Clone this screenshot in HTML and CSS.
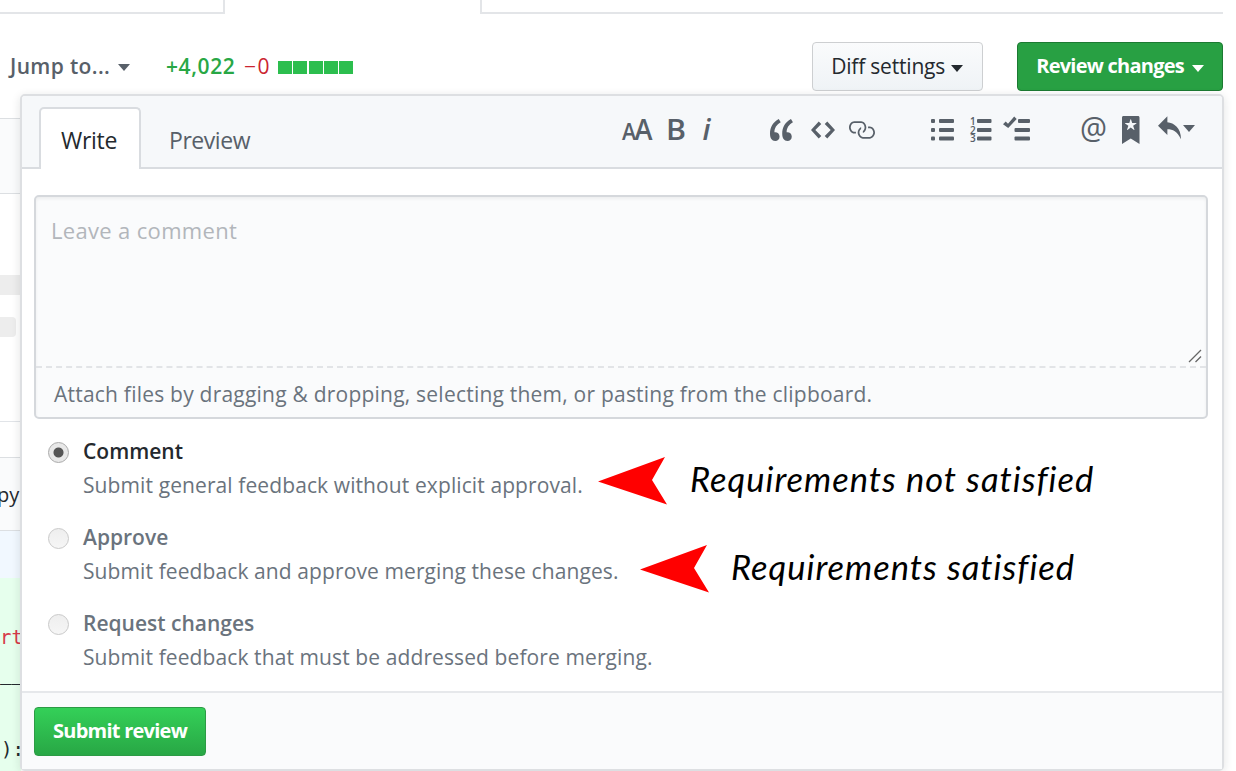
FILE: index.html
```
<!DOCTYPE html>
<html lang="en">
<head>
<meta charset="utf-8">
<title>Review changes</title>
<link rel="stylesheet" href="styles.css">
</head>
<body>
<div class="page">
  <nav class="tabs"><div class="tab-left"></div><div class="tab-right"></div></nav>
  <header class="bar">
    <span class="jump">Jump to...</span><i class="caret caret-jump"></i>
    <span class="plus">+4,022</span><span class="minus">−0</span>
    <span class="blocks"><i></i><i></i><i></i><i></i><i></i></span>
    <button class="btn btn-diff"><span class="diff-label">Diff settings</span><i class="caret"></i></button>
    <button class="btn btn-review"><span class="review-label">Review changes</span><i class="caret"></i></button>
  </header>
  <main class="behind">
    <div class="strip"></div>
    <div class="blank"><i class="chip-a"></i><i class="chip-b"></i></div>
    <div class="gap-row"></div>
    <div class="file-head"><span>py</span></div>
    <div class="hunk"></div>
    <div class="diff"><span class="kw">rt</span><span class="under">__</span><span class="code">):</span></div>
  </main>

  <section class="popover">
    <div class="head">
      <div class="tab active"><span class="write">Write</span></div>
      <div class="tab"><span class="preview">Preview</span></div>
      <div class="tools">
        <svg class="ic-size" viewBox="0 0 31 28"><text x="0" y="24" font-size="24" textLength="14" lengthAdjust="spacingAndGlyphs">A</text><text x="12.500" y="24" font-size="29" textLength="18" lengthAdjust="spacingAndGlyphs">A</text></svg>
        <svg class="ic-bold" viewBox="0 0 18 28"><text x="-2" y="24" font-size="29" textLength="20" lengthAdjust="spacingAndGlyphs">B</text></svg>
        <svg class="ic-italic" viewBox="0 0 10 28"><text x="0.500" y="24" font-size="29" font-style="italic">i</text></svg>
        <svg class="ic-quote" viewBox="0 0 13.2 16"><path d="M6.16 3.5C3.73 5.06 2.55 6.67 2.55 9.36c.16-.05.3-.05.44-.05 1.27 0 2.5.86 2.5 2.41 0 1.61-1.03 2.61-2.5 2.61-1.9 0-2.99-1.52-2.99-4.25 0-3.8 1.75-6.53 5.02-8.42L6.16 3.5zm7 0c-2.43 1.56-3.61 3.17-3.61 5.86.16-.05.3-.05.44-.05 1.27 0 2.5.86 2.5 2.41 0 1.61-1.03 2.61-2.5 2.61-1.89 0-2.98-1.52-2.98-4.25 0-3.8 1.75-6.53 5.02-8.42l1.14 1.84z"/></svg>
        <svg class="ic-code" viewBox="0 0 14 16"><path d="M9.5 3L8 4.5 11.5 8 8 11.5 9.5 13 14 8 9.5 3zm-5 0L0 8l4.5 5L6 11.5 2.5 8 6 4.5 4.5 3z"/></svg>
        <svg class="ic-link" viewBox="1 0 15 16"><path d="M4 9h1v1H4c-1.5 0-3-1.69-3-3.5S2.55 3 4 3h4c1.45 0 3 1.69 3 3.5 0 1.41-.91 2.72-2 3.25V8.59c.58-.45 1-1.27 1-2.09C10 5.22 8.98 4 8 4H4c-.98 0-2 1.22-2 2.5S3 9 4 9zm9-3h-1v1h1c1 0 2 1.22 2 2.5S13.98 12 13 12H9c-.98 0-2-1.22-2-2.5 0-.83.42-1.64 1-2.09V6.25c-1.09.53-2 1.84-2 3.25C6 11.31 7.55 13 9 13h4c1.45 0 3-1.69 3-3.5S14.5 6 13 6z"/></svg>
        <svg class="ic-ul" viewBox="0 0 23 28"><rect x="0" y="3" width="4" height="4" rx="1"/><rect x="0" y="12" width="4" height="4" rx="1"/><rect x="0" y="20.500" width="4" height="4" rx="1"/><rect x="8" y="3" width="15" height="4" rx="1"/><rect x="8" y="12" width="15" height="4" rx="1"/><rect x="8" y="20.500" width="15" height="4" rx="1"/></svg>
        <svg class="ic-ol" viewBox="0 0 22 28"><g class="digits"><text x="0" y="9">1</text><text x="0" y="17.500">2</text><text x="0" y="26">3</text></g><rect x="7" y="3" width="14.500" height="4" rx="1"/><rect x="7" y="12" width="14.500" height="4" rx="1"/><rect x="7" y="20.500" width="14.500" height="4" rx="1"/></svg>
        <svg class="ic-task" viewBox="0 0 27 28"><path d="M0 8.200L2.700 5.500 5 7.800 11.200.5 13.700 3 5.200 12z"/><rect x="15" y="3" width="12" height="4" rx="1"/><rect x="11.500" y="12" width="15.500" height="4" rx="1"/><rect x="11.500" y="20.500" width="15.500" height="4" rx="1"/></svg>
        <svg class="ic-at" viewBox="0 0 25 28"><text x="-1" y="23" font-size="31" textLength="27" lengthAdjust="spacingAndGlyphs">@</text></svg>
        <svg class="ic-mark" viewBox="0 0 10 16"><path d="M9 0H1C.27 0 0 .27 0 1v15l5-3.090L10 16V1c0-.73-.27-1-1-1zm-.78 4.250L6.360 5.610l.72 2.160c.06.22-.02.28-.2.17L5 6.600 3.120 7.940c-.19.11-.25.05-.2-.17l.72-2.160-1.860-1.360c-.17-.16-.14-.23.09-.23l2.300-.03.7-2.160h.25l.7 2.160 2.300.03c.23 0 .27.08.09.23z"/></svg>
        <svg class="ic-reply" viewBox=".5 0 13.500 16"><path d="M6 3.500c3.920.44 8 3.125 8 10-2.312-5.062-4.750-6-8-6V11L.5 5.500 6 0v3.500z"/></svg>
        <i class="caret caret-tool"></i>
      </div>
    </div>
    <div class="body">
      <div class="editor">
        <div class="area"><span class="leave">Leave a comment</span>
          <svg class="grip" viewBox="0 0 14 14"><path d="M1 13L13 1M7.500 13L13 7.500"/></svg>
        </div>
        <div class="attach"><span class="attach-label">Attach files by dragging &amp; dropping, selecting them, or pasting from the clipboard.</span></div>
      </div>
      <div class="option on"><i class="radio"></i><div class="copy"><b>Comment</b><span>Submit general feedback without explicit approval.</span></div></div>
      <div class="option"><i class="radio"></i><div class="copy"><b>Approve</b><span>Submit feedback and approve merging these changes.</span></div></div>
      <div class="option"><i class="radio"></i><div class="copy"><b>Request changes</b><span>Submit feedback that must be addressed before merging.</span></div></div>
    </div>
    <footer class="foot"><button class="btn btn-submit"><span class="submit-label">Submit review</span></button></footer>
  </section>

  <div class="note note-a"><svg class="arrow" viewBox="0 0 69 48"><path d="M0 24.500L67 0 54 23 69 47.500z"/></svg><span>Requirements not satisfied</span></div>
  <div class="note note-b"><svg class="arrow" viewBox="0 0 69 48"><path d="M0 24.500L67 0 54 23 69 47.500z"/></svg><span>Requirements satisfied</span></div>
</div>
</body>
</html>
```
FILE: styles.css
```
* { box-sizing: border-box; }
body { margin: 0; background: #fff; color: #24292e; font-family: "Open Sans", "Noto Sans", sans-serif; font-size: 21px; }
.page { position: relative; width: 1236px; height: 771px; overflow: hidden; }
span, b { white-space: nowrap; }
.tabs { display: flex; justify-content: space-between; width: 1223px; height: 14px; }
.tab-left { width: 225px; border: solid #e3e5e8; border-width: 0 2px 2px 0; }
.tab-right { width: 743px; border: solid #e3e5e8; border-width: 0 0 2px 2px; }

.bar { display: flex; align-items: flex-start; height: 104px; padding: 37px 0 0 10px; line-height: 30px; }
.bar > * { flex: none; }
.caret { display: inline-block; border: 6.5px solid transparent; border-top: 7px solid currentColor; border-bottom: 0; }
.bar > .btn { margin-top: -9px; }
.jump { width: 108px; color: #586069; font-weight: 600; letter-spacing: .35px; }
.caret-jump { color: #586069; margin-top: 13px; }
.plus { width: 78px; margin-left: 36px; color: #28a745; font-weight: 600; letter-spacing: .6px; }
.minus { width: 34px; color: #cb2431; font-weight: 500; letter-spacing: 1.5px; }
.blocks { display: flex; gap: 1.3px; margin-top: 10px; }
.blocks i { width: 14px; height: 13px; background: #2cbe4e; }
.btn { display: flex; align-items: center; gap: 6px; height: 49px; border: 1.5px solid #cdcfd1; border-radius: 4px; padding: 0 18px 2px; font: inherit; line-height: 30px; }
.btn-diff { width: 171px; margin-left: 459px; color: #24292e; background: linear-gradient(#fafbfc, #eff3f6); letter-spacing: -.2px; }
.btn-review { width: 206px; margin-left: 34px; color: #fff; background: #28a043; border-color: #1c7a32; font-weight: 700; font-size: 20px; letter-spacing: -.75px; gap: 8px; }
.btn .caret { margin-top: 5px; }

.behind { width: 21px; height: 653px; overflow: hidden; font-family: "DejaVu Sans Mono", monospace; font-size: 19px; }
.strip { height: 76px; background: #fafbfc; border: solid #dcdfe2; border-width: 1.5px 0; }
.blank { display: flex; flex-direction: column; gap: 22px; height: 228px; padding-top: 81px; border-bottom: 1.5px solid #e1e4e8; }
.chip-a { height: 20px; background: #ededed; }
.chip-b { width: 16px; height: 20px; background: #ededed; border-radius: 0 4px 4px 0; }
.gap-row { height: 35px; }
.file-head { height: 74px; padding-top: 22px; background: #fafbfc; border: solid #dcdfe2; border-width: 1.5px 0; font-family: "Open Sans", sans-serif; font-size: 20px; line-height: 30px; }
.file-head span { margin-left: -3px; }
.hunk { height: 47px; background: #f1f8ff; }
.diff { display: flex; flex-direction: column; height: 193px; padding-top: 44px; background: #e6ffed; line-height: 30px; }
.kw { color: #d73a49; }
.under { margin-top: 6px; }
.code { margin: 46px 0 0 1px; }

.popover { position: absolute; left: 20px; top: 94px; width: 1204px; height: 677px; display: flex; flex-direction: column; background: #fff; border: 2px solid #dddfe2; border-radius: 5px; box-shadow: 0 2px 10px rgba(27, 31, 35, .12); }
.head { display: flex; height: 73px; padding: 11px 0 0 17px; background: #f6f8fa; border-bottom: 2px solid #d9dce0; border-radius: 3px 3px 0 0; }
.tab { width: 130px; height: 62px; padding: 16px 0 0 28px; color: #586069; font-size: 23px; line-height: 34px; }
.preview { letter-spacing: -.45px; }
.write { letter-spacing: -.3px; }
.active { width: 102px; padding: 14px 0 0 20px; color: #24292e; background: #fff; border: 2px solid #d9dce0; border-bottom: 0; border-radius: 5px 5px 0 0; }
.tools { display: flex; align-items: flex-start; margin-left: 351px; padding-top: 9px; color: #586069; }
.tools svg { height: 28px; flex: none; fill: #586069; overflow: visible; font-weight: 600; }
.ic-size { width: 31px; }
.ic-bold { width: 18px; margin-left: 15px; }
.ic-italic { width: 10px; margin-left: 16px; }
.ic-quote { width: 23px; margin-left: 58px; }
.ic-code { width: 24px; margin-left: 18px; }
.ic-link { width: 26px; margin-left: 14px; }
.ic-ul { width: 23px; margin-left: 56px; }
.ic-ol { width: 22px; margin-left: 16px; }
.digits { font-size: 10px; }
.ic-task { width: 27px; margin-left: 11px; }
.ic-at { width: 25px; margin-left: 51px; }
.ic-at text { font-weight: 400; }
.ic-mark { width: 17.5px; margin-left: 16px; }
.ic-reply { width: 23px; margin-left: 18px; }
.caret-tool { margin: 9px 0 0 2px; }

.body { height: 522px; padding: 26px 0 0 12px; }
.editor { width: 1174px; height: 224px; margin-bottom: 17px; border: 2px solid #d5d8dc; border-radius: 5px; background: #fafbfc; box-shadow: inset 0 2px 3px rgba(27, 31, 35, .06); }
.area { display: flex; justify-content: space-between; align-items: flex-end; height: 171px; padding: 0 4px 3px 15px; border-bottom: 2px dashed #e2e4e7; }
.leave { align-self: flex-start; margin-top: 17px; color: #b2b6bb; font-size: 22px; line-height: 32px; letter-spacing: .33px; }
.grip { width: 14px; height: 14px; fill: none; stroke: #666; stroke-width: 1.3; }
.attach { padding: 11px 0 0 18px; color: #6a737d; line-height: 30px; letter-spacing: .22px; }
.option { display: flex; height: 86px; padding-left: 14px; color: #6a737d; }
.radio { width: 21px; height: 21px; margin: 6px 14px 0 0; border: 1.5px solid #c9c9c9; border-radius: 50%; background: linear-gradient(#eee, #f6f6f6); }
.on .radio { border-color: #aaa; background: radial-gradient(circle, #555 0 4.5px, #e8e8e8 5.5px); }
.copy { display: flex; flex-direction: column; align-items: flex-start; margin-top: -2px; line-height: 34px; }
.copy span { letter-spacing: .1px; }
.copy b { font-weight: 600; }
.on b { color: #24292e; }
.foot { height: 78px; padding: 14px 0 0 12px; background: #fafbfc; border-top: 2px solid #e6e8eb; }
.btn-submit { width: 172px; color: #fff; font-size: 20px; font-weight: 700; letter-spacing: -.75px; background: linear-gradient(#34d058, #28a745); border-color: #2c9b45; }

.note { position: absolute; display: flex; align-items: center; height: 48px; color: #000; font-family: Lato, sans-serif; font-size: 34.5px; font-style: italic; letter-spacing: 1px; }
.note span { margin-top: -5px; }
.note-a { left: 598px; top: 457px; gap: 23px; }
.note-b { left: 640px; top: 545px; gap: 22px; }
.arrow { width: 69px; height: 48px; fill: #f00; }
```
